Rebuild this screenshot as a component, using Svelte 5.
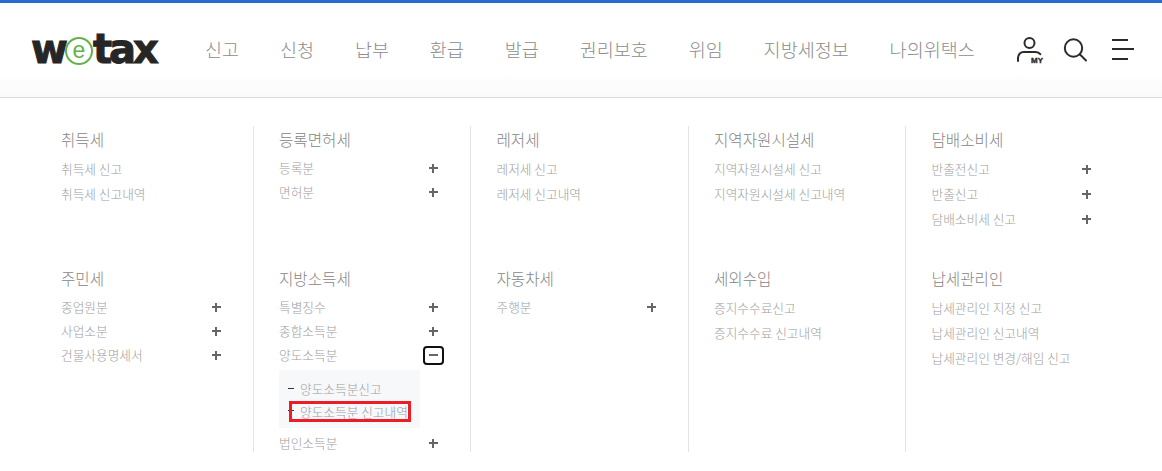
<script>
  const nav = ['신고','신청','납부','환급','발급','권리보호','위임','지방세정보','나의위택스'];
  const rows = [
    { cls: 'r1', cols: [
      { t:'취득세', links:['취득세 신고','취득세 신고내역'] },
      { t:'등록면허세', exp:['등록분','면허분'] },
      { t:'레저세', links:['레저세 신고','레저세 신고내역'] },
      { t:'지역자원시설세', links:['지역자원시설세 신고','지역자원시설세 신고내역'] },
      { t:'담배소비세', links:['반출전신고','반출신고','담배소비세 신고'], plus:true },
    ]},
    { cls: 'r2', cols: [
      { t:'주민세', exp:['종업원분','사업소분','건물사용명세서'] },
      { t:'지방소득세', exp:['특별징수','종합소득분','양도소득분','법인소득분'], open:'양도소득분' },
      { t:'자동차세', exp:['주행분'] },
      { t:'세외수입', links:['증지수수료신고','증지수수료 신고내역'] },
      { t:'납세관리인', links:['납세관리인 지정 신고','납세관리인 신고내역','납세관리인 변경/해임 신고'] },
    ]},
  ];
</script>

<div class="page">
  <header class="header">
    <div class="logo"><span>w</span><span class="ring"><span class="e">e</span></span><span>tax</span></div>
    <nav class="nav">
      {#each nav as n}<span>{n}</span>{/each}
    </nav>
    <div class="tools">
      <svg class="my" width="30" height="30" viewBox="0 0 30 30" fill="none" stroke="#2b2b2b" stroke-width="2">
        <circle cx="13.5" cy="9" r="5"/>
        <path d="M2 27v-3c0-3.4 2.5-6 5.5-6h12c2 0 3.8.8 4.8 2.2" stroke-linecap="round"/>
        <text x="15" y="29" class="mytext">MY</text>
      </svg>
      <svg class="search" width="26" height="26" viewBox="0 0 26 26" fill="none" stroke="#2b2b2b" stroke-width="2">
        <circle cx="11.5" cy="12" r="8.7"/>
        <path d="M18 18.5l6 6" stroke-linecap="round"/>
      </svg>
      <div class="burger"><i></i><i class="long"></i><i></i></div>
    </div>
  </header>

  <main class="menu">
    {#each rows as row}
      {#each row.cols as c}
        <section class="cell {row.cls}">
          <h3>{c.t}</h3>
          {#if c.links}
            <ul class="links">
              {#each c.links as l}
                <li class:haspl={c.plus}><span>{l}</span>{#if c.plus}<b class="plus"></b>{/if}</li>
              {/each}
            </ul>
          {:else}
            <ul class="exp">
              {#each c.exp as e}
                <li>
                  <div class="line"><span>{e}</span>
                    {#if c.open === e}<b class="minus"></b>{:else}<b class="plus"></b>{/if}
                  </div>
                  {#if c.open === e}
                    <div class="sub">
                      <div class="subline"><span>양도소득분신고</span></div>
                      <div class="subline on"><span>양도소득분 신고내역</span></div>
                    </div>
                  {/if}
                </li>
              {/each}
            </ul>
          {/if}
        </section>
      {/each}
    {/each}
  </main>
</div>

<style>
  :global(body) { margin: 0; background: #fff; }
  .page { width: 1162px; height: 471px; overflow: hidden; font-family: "Noto Sans CJK KR", "Noto Sans", sans-serif; color: #8a8a8a; }
  .header { box-sizing: border-box; height: 98px; border-top: 3px solid #2a6bcb; border-bottom: 1px solid #dcdcdc; display: flex; align-items: center; padding: 0 0 2px 31px; background: linear-gradient(#fff 70px, #fafafa); position: relative; }
  .logo { display: flex; align-items: center; width: 174px; flex: none; font: bold 40px/1 "DejaVu Sans", sans-serif; letter-spacing: -3px; color: #262626; -webkit-text-stroke: 1px #262626; }
  .ring { width: 28px; height: 28px; flex: none; box-sizing: border-box; border: 2px solid #62b247; border-radius: 50%; display: flex; align-items: center; justify-content: center; margin: 4px 0 0 0; }
  .e { font: 400 23px/1 "Liberation Sans", sans-serif; letter-spacing: 0; color: #62b247; -webkit-text-stroke: 0; margin-top: -2px; }
  .nav { display: flex; gap: 40.9px; font-size: 18.5px; font-weight: 300; color: #8c8c8c; width: 810px; flex: none; line-height: 1; }
  .tools { position: absolute; left: 1016px; top: 31px; display: flex; align-items: center; }
  .my { flex: none; }
  .mytext { font: 900 8px "Liberation Sans", sans-serif; fill: #2b2b2b; stroke: #2b2b2b; stroke-width: .4; }
  .search { margin-left: 15.5px; flex: none; }
  .burger { margin-left: 24.5px; width: 22px; display: flex; flex-direction: column; gap: 7.5px; }
  .burger i { display: block; height: 2px; width: 16px; background: #2b2b2b; }
  .burger i.long { width: 22px; }

  .menu { box-sizing: border-box; margin: 28px 0 0 35px; width: 1088px; height: 326px; overflow: hidden; display: grid; grid-template-columns: repeat(5, 217.5px); grid-template-rows: 139px 187px; }
  .cell { box-sizing: border-box; padding: 0 0 0 25.5px; border-left: 1px solid #e4e4e4; }
  .cell:first-child, .cell:nth-child(6) { border-left-color: transparent; padding-left: 25px; }
  h3 { margin: 3px 0 0; font-size: 15.6px; font-weight: 300; line-height: 20px; color: #858585; }
  ul { list-style: none; margin: 8px 0 0; padding: 0; font-size: 12.7px; font-weight: 300; line-height: 24px; color: #a0a0a0; }
  .links li { height: 25px; }
  .links li.haspl { height: 24px; margin-bottom: 1px; }
  .links li.haspl, .line { display: flex; justify-content: space-between; align-items: center; width: 159.5px; }
  .cell:nth-child(2) .line, .cell:nth-child(7) .line { width: 158.5px; }
  .exp { margin-top: 7px; }
  .line { height: 24px; }
  .plus, .minus { position: relative; display: block; width: 9px; height: 9px; flex: none; }
  .plus::before, .minus::before { content: ""; position: absolute; left: 0; right: 0; top: 3.5px; height: 2px; background: #666; }
  .plus::after { content: ""; position: absolute; top: 0; bottom: 0; left: 3.5px; width: 2px; background: #666; }
  .minus::after { content: ""; position: absolute; left: -6px; top: -5px; width: 17px; height: 15px; border: 2px solid #111; border-radius: 4px; }
  .sub { width: 141px; height: 58px; margin-top: 3px; margin-bottom: 3px; background: #f7f8fa; box-sizing: border-box; padding: 8px 0 0 9px; position: relative; }
  .subline { height: 22px; line-height: 22px; padding-left: 12px; position: relative; }
  .subline::before { content: ""; position: absolute; left: 0; top: 10px; width: 6px; height: 1px; background: #333; }
  .subline.on { line-height: 23px; }
  .subline.on span { color: #9a9aa8; text-decoration: underline; text-decoration-color: #3a5bbf; text-underline-offset: 2px; text-decoration-thickness: 1px; }
  .subline.on::after { content: ""; position: absolute; left: 1px; top: 1px; width: 116px; height: 15px; border: 3px solid #ee1c25; }
</style>
